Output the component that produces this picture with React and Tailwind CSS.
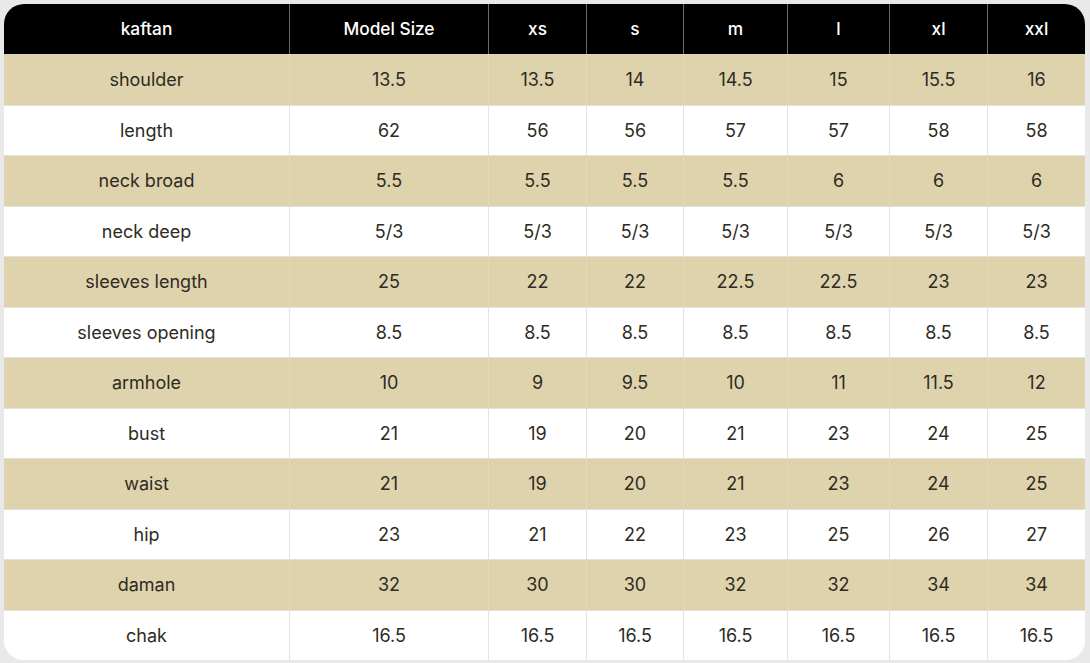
const headers = ["kaftan", "Model Size", "xs", "s", "m", "l", "xl", "xxl"];

const rows = [
  ["shoulder", "13.5", "13.5", "14", "14.5", "15", "15.5", "16"],
  ["length", "62", "56", "56", "57", "57", "58", "58"],
  ["neck broad", "5.5", "5.5", "5.5", "5.5", "6", "6", "6"],
  ["neck deep", "5/3", "5/3", "5/3", "5/3", "5/3", "5/3", "5/3"],
  ["sleeves length", "25", "22", "22", "22.5", "22.5", "23", "23"],
  ["sleeves opening", "8.5", "8.5", "8.5", "8.5", "8.5", "8.5", "8.5"],
  ["armhole", "10", "9", "9.5", "10", "11", "11.5", "12"],
  ["bust", "21", "19", "20", "21", "23", "24", "25"],
  ["waist", "21", "19", "20", "21", "23", "24", "25"],
  ["hip", "23", "21", "22", "23", "25", "26", "27"],
  ["daman", "32", "30", "30", "32", "32", "34", "34"],
  ["chak", "16.5", "16.5", "16.5", "16.5", "16.5", "16.5", "16.5"],
];

const cols = "grid-cols-[285px_199px_98px_97px_104px_102px_98px_98px]";

export default function App() {
  return (
    <div
      className="w-[1090px] h-[663px] bg-[#e9e9e9] pt-[4px] pl-[4px]"
      style={{ fontFamily: '"Inter", "Noto Sans", sans-serif' }}
    >
      <div className="w-[1081px] h-[656px] rounded-[20px] overflow-hidden bg-white flex flex-col">
        {/* Header */}
        <div className={`grid ${cols} h-[50px] bg-black text-white text-[17.3px] font-medium`}>
          {headers.map((h, i) => (
            <div
              key={h}
              className={`flex items-center justify-center ${i > 0 ? "border-l border-[#6b6b6b]" : ""}`}
            >
              {h}
            </div>
          ))}
        </div>

        {/* Rows */}
        {rows.map((r, ri) => (
          <div
            key={r[0]}
            className={`grid ${cols} h-[50.5px] text-[18px] text-[#2e2b22] ${
              ri % 2 === 0 ? "bg-[#dfd3ae]" : "bg-white"
            } ${ri > 0 ? "border-t border-[#e4e1d8]" : ""}`}
          >
            {r.map((c, ci) => (
              <div
                key={ci}
                className={`flex items-center justify-center ${
                  ci > 0 ? (ri % 2 === 0 ? "border-l border-[#e3d9b9]" : "border-l border-[#e2e2e2]") : ""
                }`}
              >
                {c}
              </div>
            ))}
          </div>
        ))}
      </div>
    </div>
  );
}
